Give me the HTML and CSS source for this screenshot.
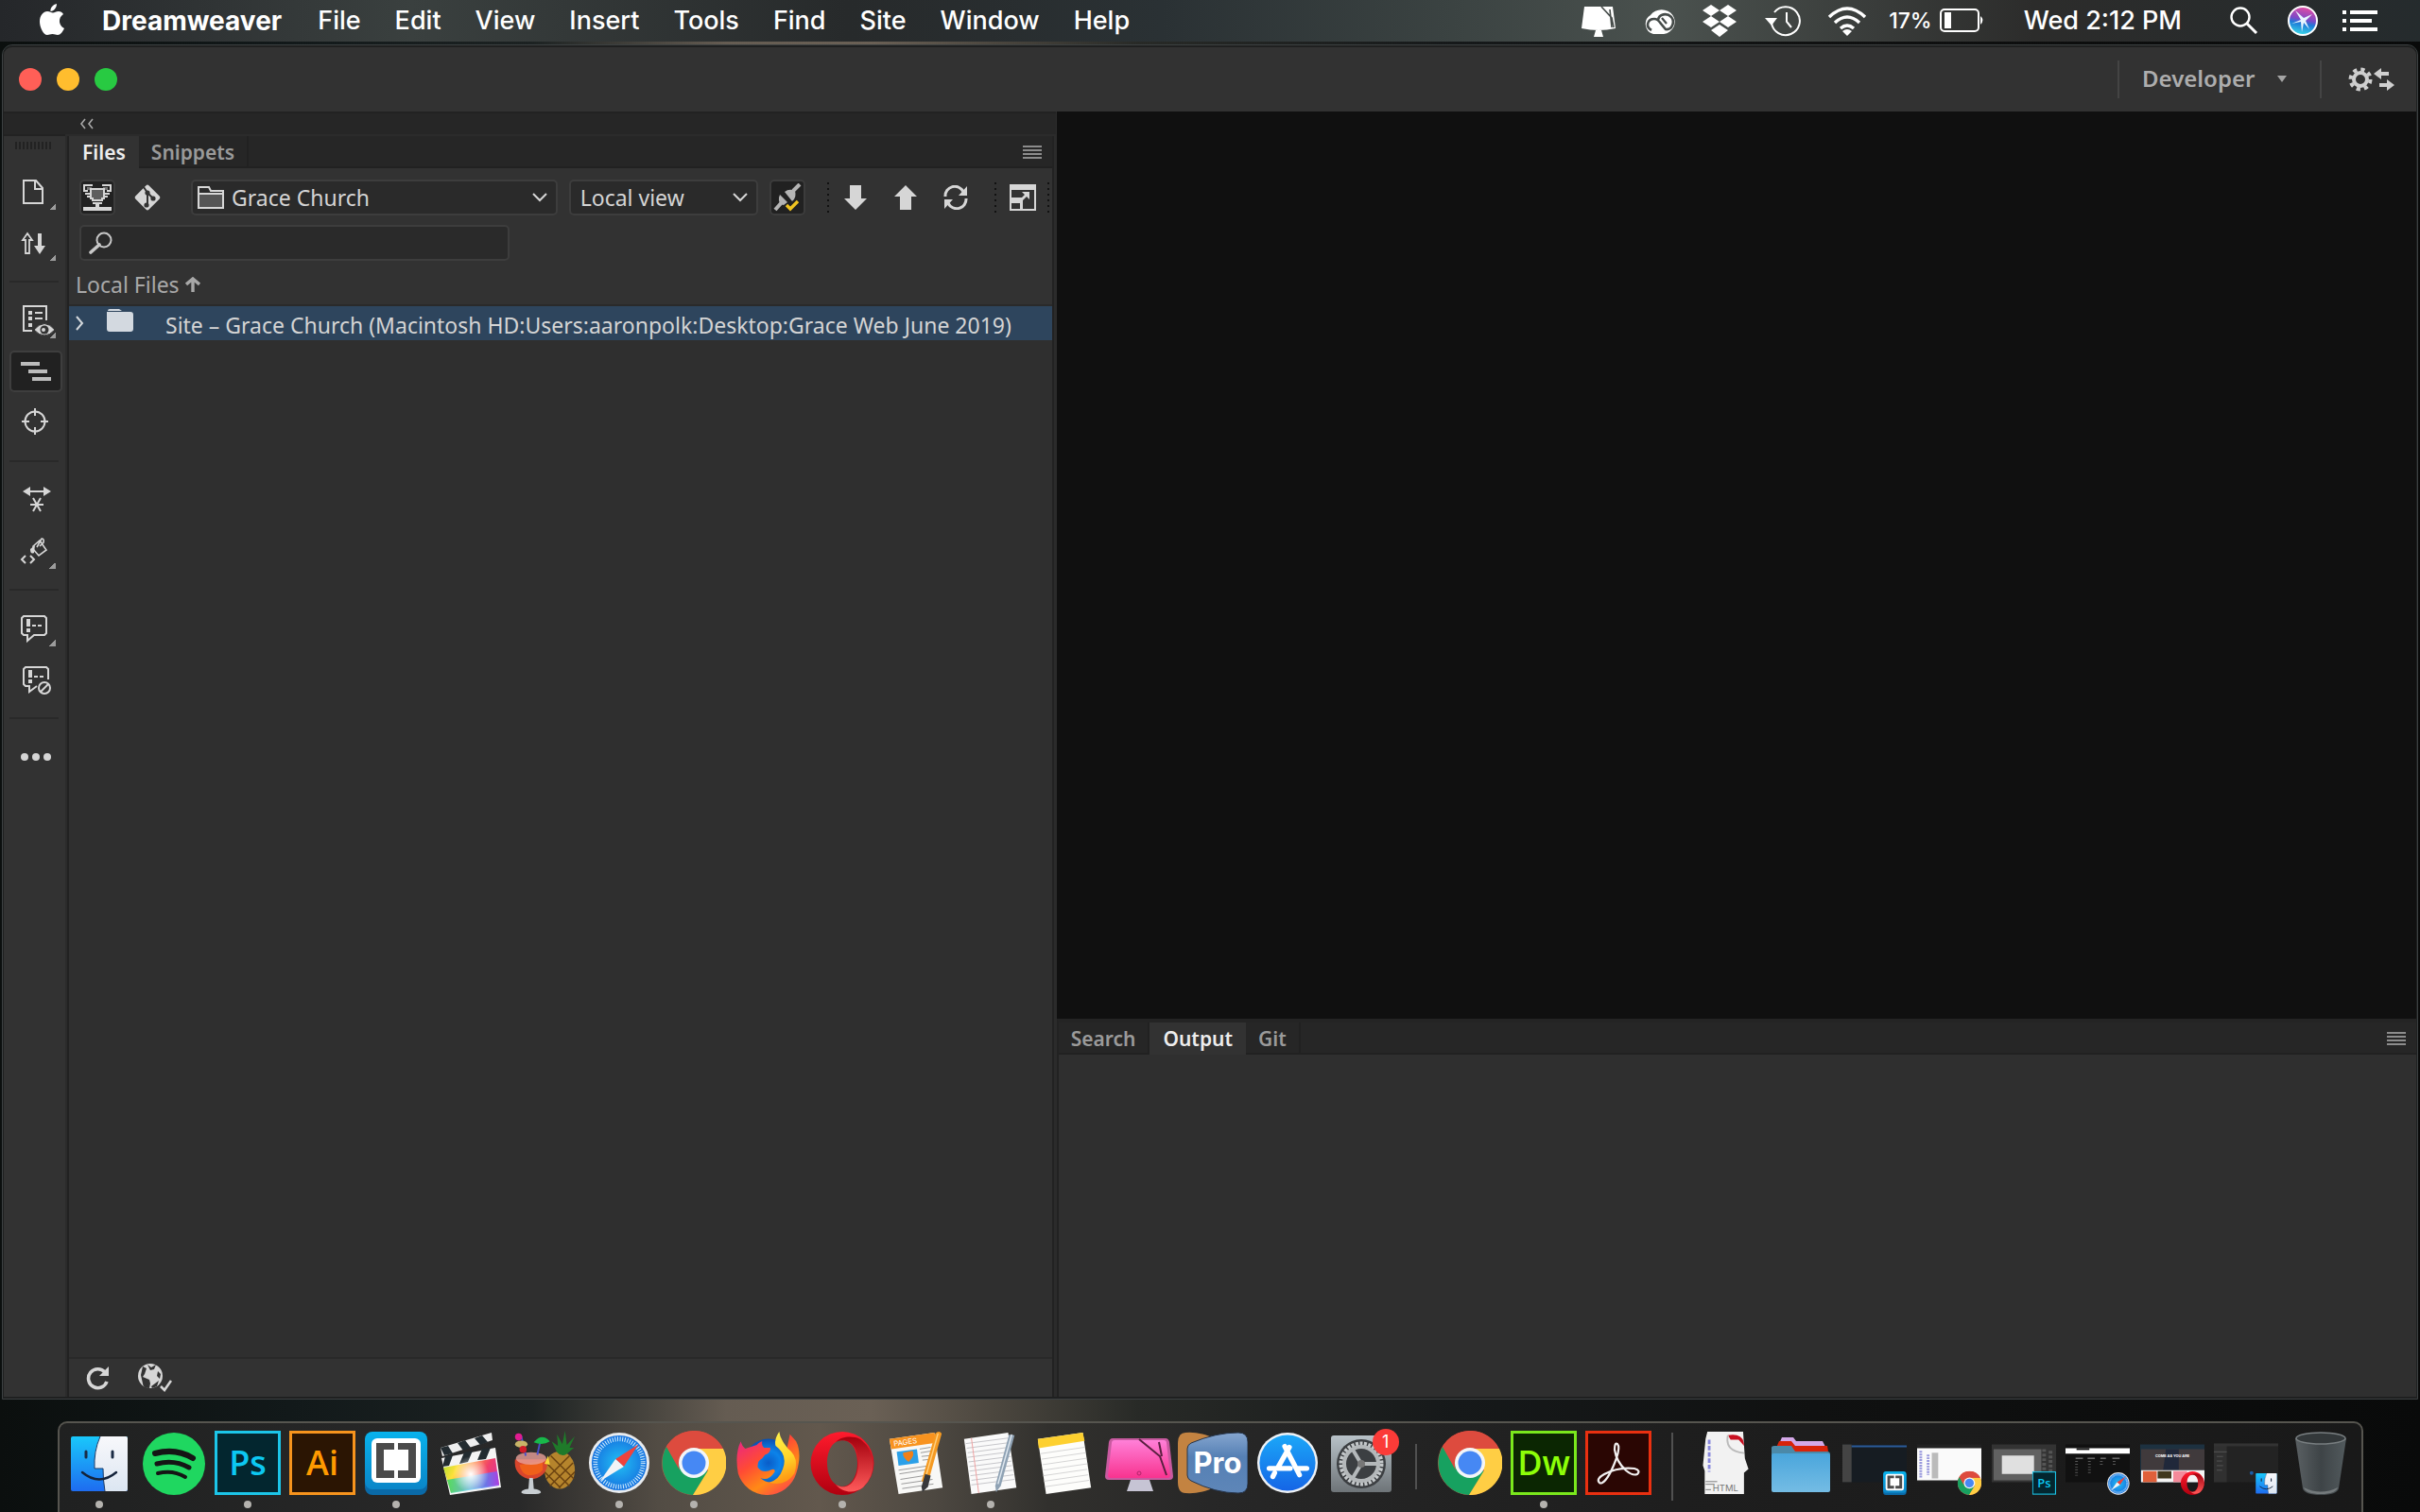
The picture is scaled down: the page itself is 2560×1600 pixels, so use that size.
FILE: index.html
```html
<!DOCTYPE html>
<html lang="en">
<head>
<meta charset="utf-8">
<title>Dreamweaver</title>
<link rel="stylesheet" href="styles.css">
</head>
<body>
<svg class="sprite" aria-hidden="true" width="0" height="0">
  <defs>
    <linearGradient id="finder-blue" x1="0" y1="0" x2="0" y2="1"><stop offset="0" stop-color="#19c8fb"/><stop offset="1" stop-color="#1e6cf0"/></linearGradient>
    <linearGradient id="finder-white" x1="0" y1="0" x2="0" y2="1"><stop offset="0" stop-color="#f8f8fb"/><stop offset="1" stop-color="#dce6f2"/></linearGradient>
    <linearGradient id="brackets-blue" x1="0" y1="0" x2="0" y2="1"><stop offset="0" stop-color="#08b2ec"/><stop offset="1" stop-color="#0a86c8"/></linearGradient>
    <linearGradient id="sky" x1="0" y1="0" x2="0" y2="1"><stop offset="0" stop-color="#1ba7f8"/><stop offset="1" stop-color="#1565e6"/></linearGradient>
    <radialGradient id="safari-sea"><stop offset="0" stop-color="#22c0f4"/><stop offset="1" stop-color="#1673e0"/></radialGradient>
    <linearGradient id="opera-red" x1="0" y1="0" x2="0" y2="1"><stop offset="0" stop-color="#ff1b2d"/><stop offset="1" stop-color="#b0000f"/></linearGradient>
    <linearGradient id="opera-light" x1="0" y1="0" x2="0" y2="1"><stop offset="0" stop-color="#a3000d"/><stop offset="1" stop-color="#ff5a5a"/></linearGradient>
    <linearGradient id="fox" x1="0.1" y1="0" x2="0.8" y2="1"><stop offset="0" stop-color="#e8238a"/><stop offset="0.4" stop-color="#ff4a35"/><stop offset="0.7" stop-color="#ff8a16"/><stop offset="1" stop-color="#ff3d50"/></linearGradient>
    <linearGradient id="flame" x1="0" y1="0" x2="0.2" y2="1"><stop offset="0" stop-color="#fff44f"/><stop offset="0.6" stop-color="#ffd52a"/><stop offset="1" stop-color="#ff9a14"/></linearGradient>
    <radialGradient id="globe"><stop offset="0" stop-color="#0a5cc8"/><stop offset="0.5" stop-color="#0b83ea"/><stop offset="1" stop-color="#0a4fb0"/></radialGradient>
    <linearGradient id="pink" x1="0" y1="0" x2="0" y2="1"><stop offset="0" stop-color="#ff80d8"/><stop offset="1" stop-color="#f8338f"/></linearGradient>
    <linearGradient id="steel" x1="0" y1="0" x2="0" y2="1"><stop offset="0" stop-color="#b8c2c8"/><stop offset="1" stop-color="#6e7478"/></linearGradient>
    <linearGradient id="pro-blue" x1="0" y1="0" x2="0" y2="1"><stop offset="0" stop-color="#86a6d0"/><stop offset="0.4" stop-color="#5580b4"/><stop offset="1" stop-color="#5e86b8"/></linearGradient>
    <linearGradient id="folder-blue" x1="0" y1="0" x2="0" y2="1"><stop offset="0" stop-color="#4aa6dc"/><stop offset="1" stop-color="#74bce4"/></linearGradient>
    <linearGradient id="rainbow" x1="0" y1="0" x2="1" y2="0.3"><stop offset="0" stop-color="#a8e02c"/><stop offset="0.3" stop-color="#ffe03a"/><stop offset="0.55" stop-color="#ff8a4a"/><stop offset="0.8" stop-color="#f0406a"/><stop offset="1" stop-color="#e03890"/></linearGradient>
    <linearGradient id="rainbow-low" x1="0" y1="0" x2="1" y2="0"><stop offset="0" stop-color="#38d860"/><stop offset="0.45" stop-color="#58c8f0"/><stop offset="0.75" stop-color="#5880f8"/><stop offset="1" stop-color="#a040f0"/></linearGradient>
    <radialGradient id="glow"><stop offset="0" stop-color="#fff"/><stop offset="1" stop-color="#fff" stop-opacity="0"/></radialGradient>
    <linearGradient id="can" x1="0" y1="0" x2="1" y2="0"><stop offset="0" stop-color="#5a6063"/><stop offset="0.5" stop-color="#3e4447"/><stop offset="1" stop-color="#525a5d"/></linearGradient>
    <linearGradient id="siri" x1="0.6" y1="0" x2="0.4" y2="1"><stop offset="0" stop-color="#e84aa0"/><stop offset="0.45" stop-color="#7a4ac8"/><stop offset="0.6" stop-color="#1d7ad8"/><stop offset="1" stop-color="#3adbe8"/></linearGradient>

    <symbol id="finder" viewBox="0 0 68 68">
      <rect x="4" y="6" width="60" height="58" rx="2" fill="url(#finder-blue)"/>
      <path d="M35 6h27a2 2 0 0 1 2 2v54a2 2 0 0 1-2 2H40q-2-12-2-24h-9Q28 20 35 6z" fill="url(#finder-white)"/>
      <path d="M35 6Q28 22 29 40h9q0 12 2 24" fill="none" stroke="#1b3a66" stroke-width="1"/>
      <path d="M20 22v6M48 22v6" stroke="#1b2b44" stroke-width="3" stroke-linecap="round"/>
      <path d="M16 44q18 15 36 0" fill="none" stroke="#14233a" stroke-width="2.4" stroke-linecap="round"/>
    </symbol>
    <symbol id="photoshop" viewBox="0 0 70 68">
      <rect x="1.500" y="1.500" width="67" height="65" fill="#03262f" stroke="#1cc5e8" stroke-width="3"/>
      <text x="35" y="47" font-size="36" text-anchor="middle" class="icon-type" fill="#0cc8f2">Ps</text>
    </symbol>
    <symbol id="brackets" viewBox="0 0 68 68">
      <rect x="1" y="4" width="66" height="64" rx="8" fill="#0a6aa8"/>
      <rect x="1" y="1" width="66" height="61" rx="8" fill="url(#brackets-blue)"/>
      <rect x="8" y="8" width="52" height="47" rx="6" fill="#fff"/>
      <path d="M13 13h19v7H21v22h11v8H13zM55 13H36v7h11v22H36v8h19z" fill="#4b4b4b"/>
    </symbol>
    <symbol id="safari" viewBox="0 0 68 68">
      <circle cx="34" cy="34" r="33" fill="#e8ebee"/>
      <circle cx="34" cy="34" r="30" fill="url(#safari-sea)"/>
      <circle cx="34" cy="34" r="26" fill="none" stroke="#d8f0ff" stroke-width="5" stroke-dasharray="1 1.720"/>
      <path d="M55 14L39 38 30 30z" fill="#f0423c"/><path d="M13 54L30 30l9 8z" fill="#f2f4f6"/>
    </symbol>
    <symbol id="chrome" viewBox="0 0 68 68">
      <circle cx="34" cy="34" r="34" fill="#dd4b3e"/>
      <path d="M5 17A34 34 0 0 0 33 68L49 43 34 34z" fill="#17a160"/>
      <path d="M65 19A34 34 0 0 1 33 68L49 42 34 19z" fill="#ffce44"/>
      <path d="M5 17l14 25a17 17 0 0 1 15-23h31A34 34 0 0 0 5 17z" fill="#dd4b3e"/>
      <circle cx="34" cy="34" r="16" fill="#f4f6f8"/><circle cx="34" cy="34" r="12.500" fill="#4688f4"/>
    </symbol>
    <symbol id="opera" viewBox="0 0 68 68">
      <path fill-rule="evenodd" d="M34 1a33.500 33.500 0 1 0 0 67 33.500 33.500 0 1 0 0-67zM34 10c10 0 16 11 16 24S44 59 34 59 18 47 18 34s6-24 16-24z" fill="url(#opera-red)"/>
      <path d="M27 12c6-6 18-7 26-3a33 33 0 0 1 3 51c-8 6-20 7-29-3 14 8 24-6 24-23S41 6 27 12z" fill="url(#opera-light)"/>
    </symbol>
  </defs>
</svg>

<header class="menubar">
  <nav class="menus" aria-label="Menu bar">
    <a href="#" class="apple" aria-label="Apple menu"><svg width="28" height="34" viewBox="0 0 28 34"><path d="M19 1c0 4-3 8-6.500 8C12 5 15 2 19 1zM26 12c-6 4-5 12 1 15-2 4-4 7-7 7-2 0-3-1-5.500-1S11 34 9 34C5 34 1 26 1 20c0-7 4-11 8-11 3 0 4 1.500 6 1.500S18 9 21 9c2 0 4 1 5 3z" fill="#fff"/></svg></a>
    <a href="#" class="app-name">Dreamweaver</a>
    <a href="#">File</a><a href="#">Edit</a><a href="#">View</a><a href="#">Insert</a><a href="#">Tools</a><a href="#">Find</a><a href="#">Site</a><a href="#">Window</a><a href="#">Help</a>
  </nav>
  <div class="status">
    <svg width="38" height="34" viewBox="0 0 38 34"><path d="M4 2h30l3 23q-18 4-36 0zM14 34h10l-2-7h-6z" fill="#fff"/><path d="M22 2l11 12 2 10M31 5l2 19" stroke="#454b49" stroke-width="1.600" fill="none"/></svg>
    <svg width="40" height="34" viewBox="0 0 40 34"><g fill="none" stroke="#fff"><path d="M25 31H14A11 11 0 0 1 11 11a14 13 0 1 1 14 20z" fill="#fff" stroke="none"/><path d="M12 27c-7-4-4-12 3-12 3 0 5 2 7 5l5 6c7 1 10-8 6-13-5-5-13-3-14 3" stroke="#454b49" stroke-width="2.600"/><path d="M28 20l-5-6" stroke="#454b49" stroke-width="2.200"/></g></svg>
    <svg class="dropbox" width="38" height="34" viewBox="0 0 38 34"><path d="M10 0l9 6-9 6-9-6zM28 0l9 6-9 6-9-6zM10 12l9 6-9 6-9-6zM28 12l9 6-9 6-9-6zM19 21l9 6-9 7-9-7z" fill="#fff"/></svg>
    <svg width="40" height="34" viewBox="0 0 40 34"><path d="M7 19A15 15 0 1 0 10 8" fill="none" stroke="#fff" stroke-width="2"/><path d="M0 14h13l-6 8z" fill="#fff"/><path d="M23 8v10l5 6" fill="none" stroke="#fff" stroke-width="2"/></svg>
    <svg width="44" height="34" viewBox="0 0 44 34"><path d="M3 13q19-18 38 0M9 19q13-12 26 0M15 25q7-6 14 0" fill="none" stroke="#fff" stroke-width="3.400"/><path d="M22 33l-5-5q5-4 10 0z" fill="#fff"/></svg>
    <span class="charge">17%</span>
    <svg class="battery" width="48" height="28" viewBox="0 0 48 28"><rect x="1" y="2" width="40" height="23" rx="4" fill="none" stroke="#fff" stroke-width="2"/><rect x="5" y="5" width="7" height="17" fill="#fff"/><path d="M43 9q5 4 0 9z" fill="#fff"/></svg>
    <time class="clock">Wed 2:12 PM</time>
    <svg width="32" height="32" viewBox="0 0 32 32"><circle cx="13" cy="12" r="9.500" fill="none" stroke="#fff" stroke-width="2.400"/><path d="M20 19l10 10" stroke="#fff" stroke-width="3"/></svg>
    <svg class="siri" width="34" height="34" viewBox="0 0 34 34"><circle cx="17" cy="17" r="15" fill="url(#siri)" stroke="#fff" stroke-width="2"/><path d="M5 20l10-4L9 6l9 8 9-4-7 7 4 9-6-7-2 10-1-11z" fill="#e8f6ff"/></svg>
    <svg width="38" height="22" viewBox="0 0 38 22"><path d="M0 2h4M0 11h4M0 20h4M8 2h29M8 11h23M8 20h29" stroke="#fff" stroke-width="4"/></svg>
  </div>
</header>

<main class="window">
  <div class="titlebar">
    <div class="lights">
      <button class="light close" aria-label="Close"></button>
      <button class="light minimize" aria-label="Minimize"></button>
      <button class="light zoom" aria-label="Zoom"></button>
    </div>
    <div class="workspace-switch">
      <button class="workspace-name">Developer<svg width="10" height="7" viewBox="0 0 10 7"><path d="M0 0h10L5 7z" fill="#a4a4a4"/></svg></button>
      <button class="sync" aria-label="Sync settings"><svg width="50" height="26" viewBox="0 0 50 26"><circle cx="13" cy="13" r="7" fill="none" stroke="#cfcfcf" stroke-width="4"/><circle cx="13" cy="13" r="10.500" fill="none" stroke="#cfcfcf" stroke-width="4" stroke-dasharray="4.200 4.046"/><path d="M27 7l8-6v4h8v4h-8v4zM49 19l-8-6v4h-8v4h8v4z" fill="#cfcfcf"/></svg></button>
    </div>
  </div>

  <div class="workspace">
    <section class="side">
      <div class="collapse"><button aria-label="Collapse panels"><svg width="16" height="12" viewBox="0 0 16 12"><path d="M6 1L2 6l4 5M14 1l-4 5 4 5" fill="none" stroke="#a8a8a8" stroke-width="1.600"/></svg></button></div>
      <div class="docked">
        <div class="toolbar" role="toolbar" aria-label="Common">
          <div class="grip"></div>
          <button class="tool more" aria-label="Open documents"><svg width="56" height="44" viewBox="0 0 56 44"><path d="M15 10h13l7 8v16H15zM27 10v9h8" fill="none" stroke="#d6d6d6" stroke-width="2"/></svg></button>
          <button class="tool more" aria-label="File management"><svg width="56" height="44" viewBox="0 0 56 44"><path d="M19 12l5 7h-3v14h-4V19h-3z" fill="none" stroke="#d6d6d6" stroke-width="1.800"/><path d="M30 12h4v13h4l-6 9-6-9h4z" fill="#d6d6d6"/></svg></button>
          <hr>
          <button class="tool more" aria-label="Live view options"><svg width="56" height="44" viewBox="0 0 56 44"><path d="M24 33h-9V7h24v15" fill="none" stroke="#d6d6d6" stroke-width="2"/><path d="M20 12h4v4h-4zM20 18h4v4h-4zM20 25h4v4h-4zM27 13h8v2h-8zM27 19h8v2h-8z" fill="#d6d6d6"/><path d="M26 32q11-13 22 0-11 12-22 0z" fill="#d6d6d6" stroke="#323232" stroke-width="1"/><circle cx="37" cy="32" r="4.500" fill="#323232"/><circle cx="36" cy="32" r="2" fill="#d6d6d6"/></svg></button>
          <button class="tool on" aria-label="Format source"><svg width="56" height="44" viewBox="0 0 56 44"><path d="M10 10h20v4H10zM18 18h20v4H18zM22 26h20v4H22z" fill="#bcbcbc"/></svg></button>
          <button class="tool" aria-label="Inspect"><svg width="56" height="44" viewBox="0 0 56 44"><circle cx="27" cy="21" r="10.500" fill="none" stroke="#d6d6d6" stroke-width="2"/><path d="M27 7v8M27 27v8M13 21h8M33 21h8" stroke="#d6d6d6" stroke-width="2"/></svg></button>
          <hr>
          <button class="tool" aria-label="Expand all"><svg width="56" height="44" viewBox="0 0 56 44"><path d="M14 13l8-5v4h14V8l8 5-8 5v-4H22v4z" fill="#d6d6d6"/><path d="M22 27h14M25 20l8 14M33 20l-8 14" stroke="#d6d6d6" stroke-width="2"/></svg></button>
          <button class="tool more" aria-label="Apply comment"><svg width="56" height="44" viewBox="0 0 56 44"><path d="M25 17l7-6 7 10-8 6-6-7zM29 18l5-9q3 0 2 4l-4 4" fill="none" stroke="#d6d6d6" stroke-width="1.600"/><path d="M17 27l-4 4 4 4M22 27l4 4-4 4" fill="none" stroke="#d6d6d6" stroke-width="2"/><path d="M22 20l5-4-1 8q-4 2-4-4z" fill="#d6d6d6"/></svg></button>
          <hr>
          <button class="tool more" aria-label="Apply comment tag"><svg width="56" height="44" viewBox="0 0 56 44"><path d="M15 9h22l2 2v16l-2 2H26l-7 6v-6h-4l-2-2V11z" fill="none" stroke="#d6d6d6" stroke-width="2"/><path d="M18 12h4v8h-4zM18 22h4v4h-4zM24 18h4v2h-4zM30 18h4v2h-4z" fill="#d6d6d6"/></svg></button>
          <button class="tool" aria-label="Remove comment"><svg width="56" height="44" viewBox="0 0 56 44"><path d="M41 22V11l-2-2H17l-2 2v16l2 2h4v6l8-6" fill="none" stroke="#d6d6d6" stroke-width="2"/><path d="M20 12h4v8h-4zM20 22h4v4h-4zM26 18h4v2h-4zM32 18h4v2h-4z" fill="#d6d6d6"/><circle cx="37" cy="31" r="6" fill="none" stroke="#d6d6d6" stroke-width="2"/><path d="M33 35l8-8" stroke="#d6d6d6" stroke-width="2"/></svg></button>
          <hr>
          <button class="tool" aria-label="Customize toolbar"><svg width="56" height="44" viewBox="0 0 56 44"><g fill="#d6d6d6"><circle cx="16" cy="22" r="4"/><circle cx="28" cy="22" r="4"/><circle cx="40" cy="22" r="4"/></g></svg></button>
        </div>

        <div class="files">
          <div class="tabs" role="tablist">
            <button class="tab active" role="tab" aria-selected="true">Files</button>
            <button class="tab" role="tab">Snippets</button>
            <button class="panel-menu" aria-label="Panel options"><svg width="20" height="14" viewBox="0 0 20 14"><path d="M0 1h20M0 5h20M0 9h20M0 13h20" stroke="#8c8c8c" stroke-width="2"/></svg></button>
          </div>
          <div class="panel-body">
            <div class="actions">
              <button class="square on" aria-label="Server connections"><svg width="30" height="28" viewBox="0 0 30 28"><path d="M10 1H1v6h4M20 1h9v6h-4M2 10h6M28 10h-6" fill="none" stroke="#d6d6d6" stroke-width="2"/><path d="M4 3h5v3H4zM21 3h5v3h-5z" fill="#777"/><path d="M8 5h14v10h-2v2h-10v-2H8z" fill="#5e5e5e" stroke="#d6d6d6" stroke-width="2"/><path d="M4 12h4v2H4zM22 12h4v2h-4zM10 19h10v2H10zM13 19h4v6h-4zM0 24h30v4H0z" fill="#d6d6d6"/></svg></button>
              <button class="square" aria-label="Git"><svg width="30" height="30" viewBox="0 0 30 30"><rect x="5" y="5" width="20" height="20" rx="2" transform="rotate(45 15 15)" fill="#d6d6d6"/><path d="M11 4l4 6v12M15 10l6 6" stroke="#323232" stroke-width="2" fill="none"/><g fill="#323232"><circle cx="15" cy="10" r="2.600"/><circle cx="21" cy="16" r="2.600"/><circle cx="14" cy="23" r="2.600"/></g></svg></button>
              <label class="select site">
                <svg width="28" height="24" viewBox="0 0 28 24"><path d="M1 23V1h11l2 4h13v18z" fill="none" stroke="#d6d6d6" stroke-width="2"/><path d="M2 9h24v13H2z" fill="#555"/><path d="M1 8h26" stroke="#d6d6d6" stroke-width="2"/></svg>
                <select aria-label="Site"><option>Grace Church</option></select>
                <svg width="16" height="10" viewBox="0 0 16 10"><path d="M1 1l7 7 7-7" fill="none" stroke="#d6d6d6" stroke-width="2"/></svg>
              </label>
              <label class="select view">
                <select aria-label="View"><option>Local view</option></select>
                <svg width="16" height="10" viewBox="0 0 16 10"><path d="M1 1l7 7 7-7" fill="none" stroke="#d6d6d6" stroke-width="2"/></svg>
              </label>
              <button class="square on" aria-label="Connect"><svg width="30" height="30" viewBox="0 0 30 30"><path d="M2 28l8-9M21 8l7-7" stroke="#b4b4b4" stroke-width="4"/><path d="M6 15q-1 7 5 8l4-3-8-8zM12 9l8 10q5-4 3-11-6-3-11 1z" fill="#b4b4b4"/><path d="M14 23l4 4 8-8" fill="none" stroke="#f0c420" stroke-width="3.400"/></svg></button>
              <span class="dots"></span>
              <div class="transfer">
                <button class="square" aria-label="Get files"><svg width="24" height="26" viewBox="0 0 24 26"><path d="M6 0h12v14h6L12 26 0 14h6z" fill="#d6d6d6"/></svg></button>
                <button class="square" aria-label="Put files"><svg width="24" height="26" viewBox="0 0 24 26"><path d="M6 26h12V12h6L12 0 0 12h6z" fill="#d6d6d6"/></svg></button>
                <button class="square" aria-label="Synchronize"><svg width="26" height="26" viewBox="0 0 26 26"><path d="M2 12a10 10 0 0 1 19-5M24 14a10 10 0 0 1-19 5" fill="none" stroke="#d6d6d6" stroke-width="3"/><path d="M25 1v10H16zM1 25V15h9z" fill="#d6d6d6"/></svg></button>
              </div>
              <span class="dots"></span>
              <button class="square" aria-label="Expand panel"><svg width="28" height="28" viewBox="0 0 28 28"><path d="M0 0h28v28H0zM2 6v8h12v12h12V6zM2 20v6h9v-6z" fill="#d6d6d6" fill-rule="evenodd"/><path d="M13 8h8v8l-3-3-4 4-2-2 4-4z" fill="#d6d6d6"/></svg></button>
              <span class="dots"></span>
            </div>
            <label class="search">
              <svg width="26" height="24" viewBox="0 0 26 24"><circle cx="16" cy="9" r="7.500" fill="none" stroke="#c8c8c8" stroke-width="2"/><path d="M11 14l-9 8" stroke="#c8c8c8" stroke-width="3.600" stroke-linecap="round"/></svg>
              <input type="text" aria-label="Search files">
            </label>
            <div class="column-head">Local Files<svg width="16" height="16" viewBox="0 0 16 16"><path d="M8 16V3M1 8l7-6 7 6" fill="none" stroke="#a8a8a8" stroke-width="3.400"/></svg></div>
            <ul class="tree" role="tree">
              <li class="row" role="treeitem" aria-selected="true">
                <svg width="10" height="18" viewBox="0 0 10 18"><path d="M2 2l6 7-6 7" fill="none" stroke="#d4d8dc" stroke-width="2"/></svg>
                <svg class="folder" width="28" height="24" viewBox="0 0 28 24"><path d="M1 2q0-2 2-2h10l3 2zM3 3h22q3 0 3 3v15q0 3-3 3H3q-3 0-3-3V3z" fill="#d3d9e0"/></svg>
                <span>Site – Grace Church (Macintosh HD:Users:aaronpolk:Desktop:Grace Web June 2019)</span>
              </li>
            </ul>
            <div class="panel-foot">
              <button aria-label="Refresh"><svg width="26" height="26" viewBox="0 0 26 26"><path d="M21 7A10 10 0 1 0 23 17" fill="none" stroke="#d6d6d6" stroke-width="3.600"/><path d="M25 1v10H15z" fill="#d6d6d6"/></svg></button>
              <button aria-label="Activity log"><svg width="36" height="30" viewBox="0 0 36 30"><circle cx="13" cy="13" r="13" fill="#d6d6d6"/><path d="M5 3l4 2-2 6-2 3 7 3 1 4-1 5Q5 26 5 21L3 12zM10 1l4 3 5-3-2 5-4 1zM21 8l3 3-1 5-3-3zM14 24l8-6-2 6-5 2z" fill="#323232"/><path d="M24 24l4 4 7-10" fill="none" stroke="#d6d6d6" stroke-width="2.600"/></svg></button>
            </div>
          </div>
        </div>
      </div>
    </section>

    <section class="stage">
      <div class="canvas"></div>
      <div class="results">
        <div class="tabs" role="tablist">
          <button class="tab" role="tab">Search</button>
          <button class="tab active" role="tab" aria-selected="true">Output</button>
          <button class="tab" role="tab">Git</button>
          <button class="panel-menu" aria-label="Panel options"><svg width="20" height="14" viewBox="0 0 20 14"><path d="M0 1h20M0 5h20M0 9h20M0 13h20" stroke="#8c8c8c" stroke-width="2"/></svg></button>
        </div>
        <div class="output"></div>
      </div>
    </section>
  </div>
</main>

<footer class="dock">
  <a href="#" class="app running" aria-label="Finder"><svg width="68" height="68"><use href="#finder"/></svg></a>
  <a href="#" class="app" aria-label="Spotify"><svg width="68" height="68" viewBox="0 0 68 68"><circle cx="34" cy="35" r="33" fill="#1fd760"/><g fill="none" stroke="#151515" stroke-linecap="round"><path d="M14 24q22-6 40 5" stroke-width="6"/><path d="M16 35q18-5 34 4" stroke-width="5"/><path d="M17 45q16-4 29 4" stroke-width="4"/></g></svg></a>
  <a href="#" class="app running" aria-label="Photoshop"><svg width="70" height="68"><use href="#photoshop"/></svg></a>
  <a href="#" class="app" aria-label="Illustrator"><svg width="70" height="68" viewBox="0 0 70 68"><rect x="1.500" y="1.500" width="67" height="65" fill="#2b1503" stroke="#f7941d" stroke-width="3"/><text x="35" y="47" font-size="36" text-anchor="middle" class="icon-type" fill="#ff9a00">Ai</text></svg></a>
  <a href="#" class="app running" aria-label="Brackets"><svg width="68" height="68"><use href="#brackets"/></svg></a>
  <a href="#" class="app" aria-label="Final Cut Pro"><svg width="68" height="68" viewBox="0 0 68 68"><path d="M2 18L56 2l1 8L4 27z" fill="#eee"/><path d="M2 18l8-2 5 8-9 2zM20 13l8-3 6 8-8 3zM38 8l8-3 6 7-8 3z" fill="#222b30"/><path d="M3 29l57-11 6 42-54 8z" fill="#f4f4f4"/><path d="M4 38l3-11 8-1-4 11zM22 35l5-12 9-2-5 12zM41 31l5-12 9-1-5 12z" fill="#222b30"/><path d="M5 39l55-10 4 28-51 8z" fill="url(#rainbow)"/><path d="M9 52l53-9 2 15-51 8z" fill="url(#rainbow-low)" opacity=".85"/><circle cx="34" cy="46" r="19" fill="url(#glow)"/></svg></a>
  <a href="#" class="app" aria-label="Tropical"><svg width="72" height="72" viewBox="0 0 72 72"><ellipse cx="53" cy="44" rx="17" ry="21" fill="#b5842c"/><path d="M38 36l26 26M43 28l26 26M36 46l18 18M68 36L42 62M64 28L38 54M70 46L52 64" stroke="#6a4210" stroke-width="1.600"/><path d="M50 24l-6-12 7 5-1-13 6 11 3-15 2 16 9-10-6 13 5 0-8 7q-6 4-11-2z" fill="#1f7a2a"/><path d="M3 32h36q2 18-15 22H18Q1 49 3 32z" fill="#d8452c"/><path d="M8 38l26-4v10q-4 6-16 6-8-2-10-12z" fill="#f0601a"/><ellipse cx="21" cy="31" rx="17" ry="7" fill="#e8a098" opacity=".8"/><path d="M19 53h4l1 12q8 1 8 4 0 2-11 2T10 69q0-3 8-4z" fill="#c8ced2"/><path d="M15 28L10 6M28 27l3-14" stroke="#4a50c8" stroke-width="2"/><path d="M24 13q9-11 18-1-8 5-18 1z" fill="#18b84a"/><circle cx="7" cy="7" r="4" fill="#e01c90"/><ellipse cx="10" cy="15" rx="7" ry="4" fill="#c8b468"/><circle cx="12" cy="21" r="4" fill="#d01c28"/><path d="M36 37l4-9 2 10z" fill="#f8d83a"/></svg></a>
  <a href="#" class="app running" aria-label="Safari"><svg width="66" height="68"><use href="#safari"/></svg></a>
  <a href="#" class="app running" aria-label="Chrome"><svg width="68" height="68"><use href="#chrome"/></svg></a>
  <a href="#" class="app" aria-label="Firefox"><svg width="70" height="72" viewBox="0 0 70 72"><circle cx="36" cy="36" r="27" fill="url(#globe)"/><path d="M5 12q1 5 5 8l13-4q4-4 6-4-1 5 2 7h7q1 6-6 8l-3 4q-6 3-5 10 4 6 12 4 8-4 7 1-7 11-16 7 10 9 23 1 11-9 5-26l5-24 7 8q7 14 0 36A34 34 0 0 1 2 48Q-2 26 5 12z" fill="url(#fox)"/><path d="M48 1q-6 9-4 16 14 10 8 26-4 12-15 15 18 5 28-10 6-18-7-28Q49 10 48 1z" fill="url(#flame)"/></svg></a>
  <a href="#" class="app running" aria-label="Opera"><svg width="68" height="68"><use href="#opera"/></svg></a>
  <a href="#" class="app" aria-label="Pages"><svg width="60" height="70" viewBox="0 0 60 70"><path d="M1 9l49-7 9 60-48 7z" fill="#f8f8f6"/><path d="M1 9l49-7 2 11L3 20z" fill="#f8931f"/><text x="6" y="17" font-size="8" class="icon-pro thin" transform="rotate(-8 6 17)" fill="#fff">PAGES</text><path d="M9 23l22-3 2 15-22 3z" fill="#2ba0e8"/><path d="M16 24l10-2q4 4-4 12-7-5-6-10z" fill="#f08018"/><path d="M34 20l12-2M35 24l12-2M36 28l10-1M37 32l10-1M11 43l34-5M12 47l32-5M13 53l32-5M14 58l34-5M15 63l34-5" stroke="#999" stroke-width="1"/><path d="M51 3q4-4 7 0L43 57l-7-2z" fill="#f59a22"/><path d="M54 3L39 56" stroke="#ffd080" stroke-width="1.500"/><path d="M40 47l6 2-3 12-6 6-1-6z" fill="#38383a"/></svg></a>
  <a href="#" class="app running" aria-label="TextEdit"><svg width="60" height="70" viewBox="0 0 60 70"><path d="M1 9l48-7 9 60-49 7z" fill="#fafafa"/><path d="M3 14l46-6M4 19l46-6M5 24l45-6M5 29l46-6M6 34l46-6M7 39l46-6M7 44l46-6M8 49l46-6M9 54l46-6M9 59l47-6" stroke="#c4c4c8"/><path d="M9 8l8 60" stroke="#f0a0a0"/><path d="M50 4l6 1-15 55-5 7-1-7z" fill="#8fa2b4"/><path d="M53 4L38 58" stroke="#dfe8f0" stroke-width="1.500"/></svg></a>
  <a href="#" class="app" aria-label="Notes"><svg width="60" height="70" viewBox="0 0 60 70"><path d="M1 9l49-7 9 60-49 7z" fill="#fdfdfb"/><path d="M1 9l49-7 2 9L2 19z" fill="#fdd02f"/><path d="M4 25l48-7M5 31l48-7M6 37l48-7M7 43l48-7M7 49l48-7M8 55l48-7M9 61l48-7" stroke="#d4d4d4"/></svg></a>
  <a href="#" class="app" aria-label="CleanMyMac"><svg width="72" height="68" viewBox="0 0 72 68"><path d="M27 52h20l4 12H23z" fill="#c6c4d4"/><path d="M8 8h56q3 0 4 4l4 36q0 4-4 4H4q-4 0-4-4L4 12q1-4 4-4z" fill="#c85aa0"/><path d="M10 10h52q3 0 3 3l4 34q0 3-3 3H6q-3 0-3-3l4-34q0-3 3-3z" fill="url(#pink)"/><path d="M36 9l22 18 7 20M57 12l3 15" fill="none" stroke="#5a2040" stroke-width="2"/><circle cx="36" cy="45" r="2" fill="none" stroke="#b0246a"/></svg></a>
  <a href="#" class="app" aria-label="ProPresenter"><svg width="74" height="68" viewBox="0 0 74 68"><path d="M8 2q13-1 26 4v56Q21 67 8 66q-8 0-8-12V14Q0 2 8 2z" fill="#c38341"/><path d="M14 13Q40 2 64 2q10 0 10 10v44q0 10-10 10-24 0-50-13-4-2-4-6V19q0-4 4-6z" fill="url(#pro-blue)" stroke="#25344a"/><text x="42" y="45" font-size="31" text-anchor="middle" class="icon-pro" fill="#fff">Pro</text></svg></a>
  <a href="#" class="app" aria-label="App Store"><svg width="66" height="68" viewBox="0 0 68 68"><circle cx="34" cy="34" r="33" fill="#eef2f6"/><circle cx="34" cy="34" r="30.500" fill="url(#sky)"/><path d="M36 17L23 40M31 16l16 31M14 40h23M45 40h10M20 45l-2 4" stroke="#fff" stroke-width="5.500" stroke-linecap="round"/></svg></a>
  <a href="#" class="app" aria-label="System Preferences"><svg width="66" height="68" viewBox="0 0 66 68"><rect x="1" y="5" width="64" height="60" rx="3" fill="url(#steel)"/><circle cx="33" cy="35" r="26" fill="#3c3f42"/><circle cx="33" cy="35" r="21" fill="none" stroke="#c4c8ca" stroke-width="5" stroke-dasharray="3 1.400"/><circle cx="33" cy="35" r="18" fill="none" stroke="#b4b8ba" stroke-width="4"/><path d="M33 35L24 20M33 35h17M33 35l-9 15" stroke="#b4b8ba" stroke-width="4"/><circle cx="33" cy="35" r="4" fill="#777"/></svg><span class="badge">1</span></a>
  <span class="divider short"></span>
  <a href="#" class="app" aria-label="Chrome window"><svg width="68" height="68"><use href="#chrome"/></svg></a>
  <a href="#" class="app running" aria-label="Dreamweaver"><svg width="70" height="68" viewBox="0 0 70 68"><rect x="1.500" y="1.500" width="67" height="65" fill="#0b2602" stroke="#7ae81c" stroke-width="3"/><text x="35" y="47" font-size="36" text-anchor="middle" class="icon-type" fill="#8dff08">Dw</text></svg></a>
  <a href="#" class="app" aria-label="Acrobat"><svg width="70" height="68" viewBox="0 0 70 68"><rect x="1.500" y="1.500" width="67" height="65" fill="#2a0603" stroke="#ea3010" stroke-width="3"/><path d="M15 55q-4-4 5-9 15-8 32-6 7 2 3 6-5 2-12-4-10-9-12-22 0-8 3-6 3 3-1 15-8 22-15 26-2 1-3 0z" fill="none" stroke="#f2f0f0" stroke-width="2.200"/></svg></a>
  <span class="divider"></span>
  <a href="#" class="app" aria-label="Documents stack"><svg width="52" height="72" viewBox="0 0 52 72"><path d="M5 1h40l2 30 4 12-5 4v24H2V45l-2-6 3-30z" fill="#f2f2f2"/><path d="M28 5q18-3 18 12l-6-7-9 0z" fill="#c80f20"/><path d="M28 5q-4 18 18 20" fill="none" stroke="#bbb" stroke-width="2"/><path d="M7 10v36" stroke="#8888dd" stroke-width="3" stroke-dasharray="5 2"/><path d="M3 57h13M3 60h10M3 66h6" stroke="#777"/><text x="11" y="68" font-size="10" class="icon-pro thin" fill="#777">HTML</text></svg></a>
  <a href="#" class="app" aria-label="Folder"><svg width="62" height="68" viewBox="0 0 62 68"><path d="M8 14l3-7h12l3 4h28l4 8H8z" fill="#d4a8e8"/><path d="M5 18l3-7h13l4 5h34l1 6H4z" fill="#d8230a"/><path d="M0 18q0-2 3-2h18l4 6h34q3 0 3 3v8H0z" fill="#4b89a8"/><rect x="0" y="24" width="62" height="41" rx="2" fill="url(#folder-blue)"/></svg></a>
  <a href="#" class="app" aria-label="Brackets window"><svg width="70" height="70" viewBox="0 0 70 70"><path d="M0 15h70v41H0z" fill="#161c22"/><path d="M0 15h10v41H0z" fill="#444"/><path d="M10 16h60v2H10z" fill="#2a5a98"/><use href="#brackets" x="44" y="44" width="26" height="26"/></svg></a>
  <a href="#" class="app" aria-label="Chrome window"><svg width="70" height="70" viewBox="0 0 70 70"><path d="M0 15h70v41H0z" fill="#222"/><path d="M0 19h70v35H0z" fill="#fafafa"/><path d="M4 22v30M12 26v22" stroke="#99d" stroke-width="3" stroke-dasharray="2 1"/><path d="M16 24h7v28h-7z" fill="#bbb"/><use href="#chrome" x="44" y="44" width="26" height="26"/></svg></a>
  <a href="#" class="app" aria-label="Photoshop window"><svg width="70" height="70" viewBox="0 0 70 70"><path d="M0 15h70v41H0z" fill="#333"/><path d="M2 20h52v34H2z" fill="#616161"/><path d="M11 27h35v20H11z" fill="#e0e0e0"/><path d="M57 20v30M64 22v30" stroke="#555" stroke-width="4" stroke-dasharray="3 2"/><use href="#photoshop" x="44" y="44" width="26" height="26"/></svg></a>
  <a href="#" class="app" aria-label="Safari window"><svg width="70" height="70" viewBox="0 0 70 70"><path d="M0 15h70v41H0z" fill="#111"/><path d="M0 19h70v6H0z" fill="#fff"/><path d="M12 19h14v2H12z" fill="#111"/><path d="M11 30h8M24 30h8M38 30h6M51 30h8" stroke="#999"/><path d="M12 33v18M26 33v14M39 33v6M53 33v6" stroke="#555" stroke-width="3" stroke-dasharray="1 2"/><use href="#safari" x="45" y="45" width="25" height="25"/></svg></a>
  <a href="#" class="app" aria-label="Opera window"><svg width="70" height="70" viewBox="0 0 70 70"><path d="M0 15h70v41H0z" fill="#1d3140"/><path d="M1 20h69v23H1z" fill="#403a3c"/><path d="M28 20h14v23H25z" fill="#20283a"/><path d="M1 43h69v13H1z" fill="#f4f4f4"/><path d="M3 44h15v12H3z" fill="#e0603a"/><path d="M19 44h15v8H19z" fill="#40381e"/><path d="M36 44h15v12H36z" fill="#f48a9a"/><text x="35" y="29" font-size="4" text-anchor="middle" class="icon-pro" fill="#fff">COME AS YOU ARE</text><use href="#opera" x="44" y="44" width="26" height="26"/></svg></a>
  <a href="#" class="app" aria-label="Finder window"><svg width="70" height="70" viewBox="0 0 70 70"><path d="M0 14h70v42H0z" fill="#232323"/><path d="M0 16h14v40H0z" fill="#303030"/><path d="M0 14h70v3H0z" fill="#333"/><path d="M0 23h14M3 28h7M3 33h6M3 38h7M3 43h6" stroke="#555"/><circle cx="41" cy="46" r="2" fill="#1d5fa8"/><use href="#finder" x="44" y="44" width="26" height="26"/></svg></a>
  <a href="#" class="app" aria-label="Trash"><svg width="54" height="68" viewBox="0 0 54 68"><path d="M0 8l8 53q2 7 19 7t19-7l8-53z" fill="url(#can)"/><ellipse cx="27" cy="8" rx="26" ry="6" fill="#33383a" stroke="#787e80" stroke-width="1.500"/><path d="M9 60q18 9 36 0-2 7-18 7T9 60z" fill="#747a7c"/></svg></a>
</footer>
</body>
</html>
```
FILE: styles.css
```css
* { box-sizing: border-box; }

body {
  margin: 0;
  min-height: 100vh;
  display: flex;
  flex-direction: column;
  color: #d4d4d4;
  font: 23px/28px "Noto Sans", sans-serif;
  background: linear-gradient(90deg, #0b0f0e 0, #12191a 12%, #1c2222 22%, #655c52 30%, #6a6055 36%, #4c473f 41%, #282a27 47%, #16191a 60%, #101111 75%, #090a0a 100%);
}

button, input, select {
  font: inherit;
  color: inherit;
  background: none;
  border: 0;
  margin: 0;
  padding: 0;
}
a { color: inherit; text-decoration: none; }
svg { display: block; flex: none; }
.sprite { position: absolute; }

/* System menu bar */
.menubar {
  height: 44px;
  display: flex;
  align-items: center;
  justify-content: space-between;
  padding: 0 44px 0 41px;
  color: #fff;
  font: 500 27px/44px Inter, sans-serif;
  background: linear-gradient(90deg, #25272a 0, #3a403f 17%, #272a2b 35%, #2a3134 48%, #3b4342 60%, #4a514e 69%, #2c2c2b 84%, #252b2d 100%);
}
.menus { display: flex; align-items: center; gap: 36px; }
.app-name { margin-right: 2px; font-size: 28px; font-weight: 700; }
.apple { margin: -4px 3px 0 0; }
.status { display: flex; align-items: center; gap: 25px; }
.dropbox { margin-right: 4px; }
.charge { font-size: 23px; margin: 0 -17px 0 -3px; }
.battery { margin-right: 16px; }
.clock { margin-right: 24px; }
.siri { margin-left: 5px; }

/* Application window */
.window {
  flex: 1;
  display: flex;
  flex-direction: column;
  margin: 4px 3px 0;
  border: solid #1f2020;
  border-width: 2px 1px;
  border-radius: 10px 10px 0 0;
  background: #323232;
  outline: 1px solid #3c4142;
  overflow: hidden;
}
.titlebar {
  height: 68px;
  display: flex;
  align-items: center;
  justify-content: space-between;
  padding: 0 22px 0 16px;
}
.lights { display: flex; gap: 16px; }
.light { width: 24px; height: 24px; border-radius: 50%; }
.close { background: #ff5f57; }
.minimize { background: #ffbd2e; }
.zoom { background: #28ca42; }
.workspace-switch { display: flex; height: 40px; align-items: stretch; }
.workspace-switch button { border-left: 2px solid #444; }
.workspace-name {
  display: flex;
  align-items: center;
  gap: 24px;
  width: 214px;
  padding: 0 0 2px 24px;
  color: #adadad;
  font-size: 24px;
  font-weight: 600;
}
.sync { padding-left: 28px; }

.workspace { flex: 1; display: flex; }
.side { width: 43.6%; display: flex; flex-direction: column; }
.collapse {
  display: flex;
  align-items: center;
  height: 26px;
  padding-left: 80px;
  border: solid #222;
  border-width: 2px 0;
  background: #262626;
}
.docked { flex: 1; display: flex; }

/* Left tool strip */
.toolbar {
  width: 64px;
  padding: 6px 0 0 6px;
  display: flex;
  flex-direction: column;
  gap: 10px;
}
.grip {
  width: 38px;
  height: 8px;
  margin: 0 0 13px 6px;
  background: repeating-linear-gradient(90deg, #222 0 2px, transparent 2px 4px);
}
.toolbar hr { width: 52px; height: 2px; margin: 8px 0; border: 0; background: #292929; }
.tool { position: relative; width: 56px; height: 44px; border-radius: 5px; }
.tool.on { background: #212121; border: 2px solid #3e3e3e; }
.more::after {
  content: "";
  position: absolute;
  left: 42px;
  top: 34px;
  width: 7px;
  height: 7px;
  background: linear-gradient(135deg, transparent 50%, #9c9c9c 50%);
}

/* Files panel */
.files {
  flex: 1;
  min-width: 0;
  display: flex;
  flex-direction: column;
  margin: 0 2px 0 3px;
  border: solid #222;
  border-width: 0 2px;
  outline: 2px solid #2b2b2b;
}
.tabs {
  display: flex;
  height: 34px;
  background: #262626;
  box-shadow: inset 0 -2px #212121;
}
.tab {
  padding: 0 13px;
  border-right: 2px solid #212121;
  color: #9a9a9a;
  font-size: 21px;
  font-weight: 600;
}
.tab.active { padding: 0 14px; background: #323232; color: #ededed; border: 0; }
.panel-menu { margin: 0 11px 0 auto; }
.panel-body { flex: 1; display: flex; flex-direction: column; }
.actions { display: flex; align-items: center; height: 38px; margin: 12px 0 10px; padding: 0 3px 0 11px; }
.square { width: 38px; height: 38px; display: grid; place-items: center; border-radius: 5px; }
.square.on { background: #212121; border: 2px solid #3c3c3c; }
.square + .square { margin-left: 15px; }
.select {
  height: 38px;
  display: flex;
  align-items: center;
  gap: 8px;
  padding: 0 9px 0 5px;
  border: 2px solid #3d3d3d;
  border-radius: 5px;
  background: #2a2a2a;
}
.select select { flex: 1; min-width: 0; appearance: none; outline: 0; }
.site { flex: 1; margin: 0 12px 0 27px; }
.view { width: 200px; margin-right: 12px; padding-left: 10px; }
.dots {
  width: 2px;
  height: 32px;
  margin: 0 9px;
  background: repeating-linear-gradient(#111 0 2px, transparent 2px 6px);
}
.square + .dots { margin-left: 23px; }
.square + .dots:last-child { margin: 0 0 0 7px; }
.transfer { display: flex; margin-right: 13px; }
.search {
  display: flex;
  align-items: center;
  width: 455px;
  height: 38px;
  margin-left: 11px;
  padding-left: 8px;
  border: 2px solid #3d3d3d;
  border-radius: 5px;
  background: #2a2a2a;
}
.search input { flex: 1; min-width: 0; outline: 0; }
.column-head {
  display: flex;
  align-items: center;
  gap: 6px;
  height: 46px;
  padding: 4px 0 0 7px;
  color: #a8a8a8;
}
.tree { flex: 1; margin: 0; padding: 0; list-style: none; background: #2f2f2f; }
.row { display: flex; align-items: center; height: 38px; padding-left: 6px; border-top: 2px solid #2a2a2a; background: #2e455d; }
.row span { margin-left: 34px; white-space: nowrap; padding-top: 3px; }
.folder { margin: -6px 0 0 24px; }
.panel-foot {
  display: flex;
  align-items: center;
  gap: 30px;
  height: 42px;
  padding-left: 17px;
  border-top: 2px solid #292929;
}

/* Document area and results panel */
.stage { flex: 1; min-width: 0; display: flex; flex-direction: column; border-left: 1px solid #2b2b2b; }
.canvas { flex: 1; background: #101010; }
.results {
  height: 400px;
  display: flex;
  flex-direction: column;
  border-top: 4px solid #242424;
  border-left: 2px solid #222;
}
.output { flex: 1; background: #2f2f2f; }

/* Dock */
.dock {
  display: flex;
  height: 96px;
  margin: 24px 60px 0 61px;
  padding: 8px 4px 0 3px;
  border: solid #56554f;
  border-width: 2px 2px 0;
  border-radius: 10px 10px 0 0;
  background: linear-gradient(90deg, #202121 0, #292929 20%, #524c44 26%, #62584d 33%, #4d4841 38%, #31302d 43%, #272727 50%, #1e1e1e 70%, #191919 100%);
}
.app { position: relative; flex: 1; display: flex; flex-direction: column; align-items: center; }
.app > svg { height: 68px; }
.running::after {
  content: "";
  width: 8px;
  height: 8px;
  margin-top: 6px;
  border-radius: 50%;
  background: #b4b2ae;
}
.divider { width: 2px; height: 72px; margin: 2px 17px; background: #505050; }
.divider.short { height: 48px; margin-top: 14px; }
.badge {
  position: absolute;
  top: -2px;
  right: 0;
  width: 28px;
  height: 28px;
  border-radius: 50%;
  background: #fb3b38;
  color: #fff;
  font: 18px/28px Inter, sans-serif;
  text-align: center;
}
.icon-type { font-family: "Open Sans", sans-serif; font-weight: 600; }
.icon-pro { font-family: Inter, sans-serif; font-weight: 700; }
.thin { font-weight: 400; }
```
